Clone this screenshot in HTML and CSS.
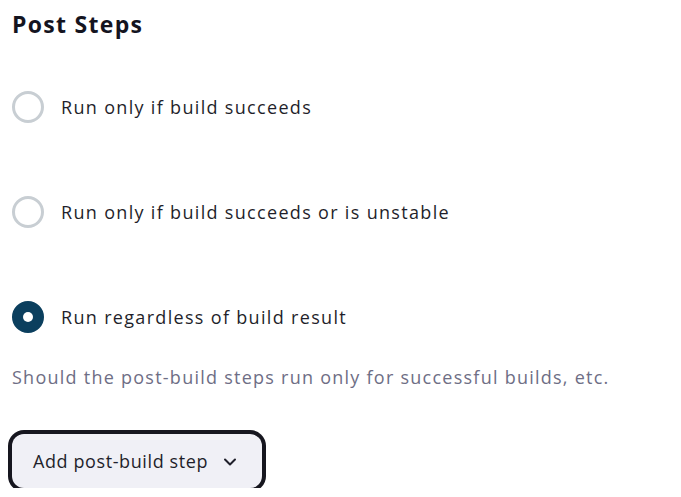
FILE: index.html
```html
<!DOCTYPE html>
<html>
<head>
<meta charset="utf-8">
<link rel="stylesheet" href="styles.css">
</head>
<body>
<div class="page">
  <h2 class="title">Post Steps</h2>
  <div class="radios">
    <label class="radio"><span class="dot"></span><span class="label">Run only if build succeeds</span></label>
    <label class="radio"><span class="dot"></span><span class="label">Run only if build succeeds or is unstable</span></label>
    <label class="radio"><span class="dot checked"></span><span class="label">Run regardless of build result</span></label>
  </div>
  <p class="desc">Should the post-build steps run only for successful builds, etc.</p>
  <button class="btn"><span class="btn-text">Add post-build step</span>
    <svg class="chev" width="14" height="14" viewBox="0 0 14 14"><path d="M2 4.5 L7 9.5 L12 4.5" fill="none" stroke="#20202b" stroke-width="2" stroke-linecap="round" stroke-linejoin="round"/></svg>
  </button>
</div>
</body>
</html>
```
FILE: styles.css
```css
html, body { margin: 0; padding: 0; background: #fff; }
body { font-family: "Open Sans", "Noto Sans CJK KR", sans-serif; color: #1f1f2b; }
.page { padding: 0 12px; }
.title { margin: 0; padding-top: 8px; font-size: 23px; font-weight: 700; line-height: 32px; letter-spacing: 1.3px; color: #14141f; }
.radios { display: flex; flex-direction: column; gap: 73px; margin-top: 51px; }
.radio { display: flex; align-items: center; gap: 17px; height: 32px; }
.dot { width: 26px; height: 26px; border: 3px solid #c8ced3; border-radius: 50%; box-sizing: content-box; flex: none; position: relative; }
.dot.checked { border-color: #0b3f5e; background: #0b3f5e; }
.dot.checked::after { content: ""; position: absolute; left: 8px; top: 8px; width: 10px; height: 10px; border-radius: 50%; background: #fff; }
.label { font-size: 18px; letter-spacing: 1.32px; color: #1f1f2b; }
.desc { margin: 32px 0 0; font-size: 18px; line-height: 24px; letter-spacing: 1.25px; color: #6e6e85; }
.btn { margin-top: 45px; display: inline-flex; align-items: center; gap: 15px; height: 54px; padding: 0 25px 0 21px; border: none; border-radius: 12px; background: #f0f0f6; box-shadow: 0 0 0 4px #16161f; font-family: inherit; font-size: 18px; color: #1f1f2b; }
.btn-text { letter-spacing: 0.6px; }
.chev { margin-top: 1px; }
```
